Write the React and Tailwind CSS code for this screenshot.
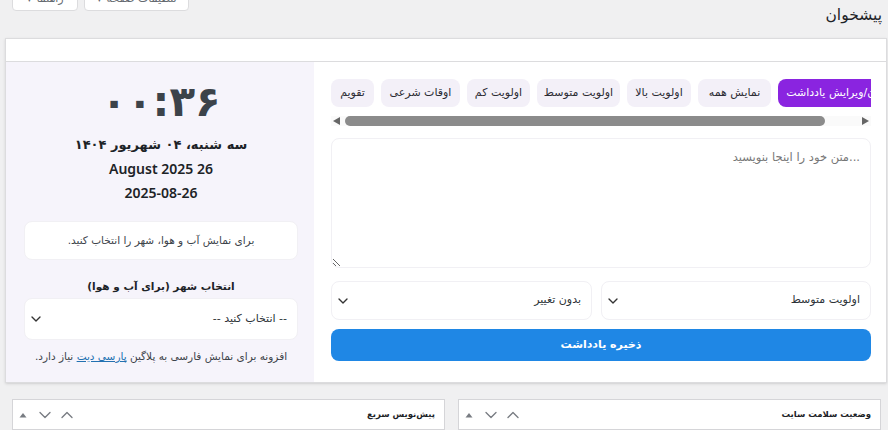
import { ChevronDown, ChevronUp } from "lucide-react";

const tabs = [
    { label: "نمایش همه", width: "w-[73px]" },
    { label: "اولویت بالا", width: "w-[64px]" },
    { label: "اولویت متوسط", width: "w-[83px]" },
    { label: "اولویت کم", width: "w-[63px]" },
    { label: "اوقات شرعی", width: "w-[79px]" },
    { label: "تقویم", width: "w-[43px]" },
];

const Dropdown = ({ label, className }) => {
    return (
        <div className={`flex items-center justify-between rounded-lg border border-[#f1f0f4] bg-white pr-2.5 pl-[3px] text-[11px] text-[#2c3338] ${className}`}>
            <span>{label}</span>
            <ChevronDown size={16} strokeWidth={2} className="text-[#333]" />
        </div>
    );
};

const Postbox = ({ title, className }) => {
    return (
        <div className={`flex h-[31px] items-center justify-between border border-[#d5d5d8] bg-white pr-[9px] ${className}`}>
            <h2 className="text-[8.5px] font-bold text-[#1d2327]">{title}</h2>
            <div className="flex items-center gap-[2px] text-[#787c82]">
                <ChevronUp size={20} strokeWidth={1.6} />
                <ChevronDown size={20} strokeWidth={1.6} />
                <svg width="20" height="20" viewBox="0 0 20 20"><path d="M6.5 12.5 10 8l3.5 4.5z" fill="currentColor" /></svg>
            </div>
        </div>
    );
};

export default function App() {
    return (
        <div dir="rtl" className="flex h-[430px] w-[888px] flex-col overflow-hidden bg-[#f0f0f1] font-['DejaVu_Sans',sans-serif] text-[#1d2327]">
            <header className="flex h-[38px] shrink-0 justify-between pr-[6px] pl-[12px]">
                <h1 className="pt-1 text-[15.5px] leading-[22px] font-medium">پیشخوان</h1>
                <div className="-mt-[13px] flex h-[24px] gap-[6px] text-[11px] text-[#646970]">
                    <button className="flex w-[105px] items-center justify-center gap-1 rounded-b border border-[#dcdcde] bg-white">
                        تنظیمات صفحه <span className="text-[8px]">▼</span>
                    </button>
                    <button className="flex w-[66px] items-center justify-center gap-1 rounded-b border border-[#dcdcde] bg-white">
                        راهنما <span className="text-[8px]">▼</span>
                    </button>
                </div>
            </header>

            <section className="mr-[1px] ml-[5px] shrink-0 border border-[#dcdcde] bg-white shadow-sm">
                <div className="h-[23px] border-b border-[#dcdcde]" />
                <div className="grid h-[320px] grid-cols-[572px_1fr]">
                    <div className="flex flex-col pt-[17px] pr-[15px] pl-[17px]">
                        <div className="flex gap-[7px] overflow-hidden text-[11px] text-[#2c2c34]">
                            <span className="-mr-[37px] flex h-[28px] w-[130px] shrink-0 items-center justify-center rounded-lg bg-[#8a24e0] text-white">افزودن/ویرایش یادداشت</span>
                            {tabs.map((tab) => (
                                <span key={tab.label} className={`flex h-[28px] shrink-0 items-center justify-center rounded-lg bg-[#f3f0f8] ${tab.width}`}>{tab.label}</span>
                            ))}
                        </div>
                        <div className="mt-[9px] flex h-[10px] shrink-0 items-center justify-between bg-[#fafafa] px-[2px]">
                            <span className="border-y-4 border-l-[7px] border-y-transparent border-l-[#666]" />
                            <div className="flex h-full flex-1 justify-end pl-[5px]">
                                <div className="h-full w-[480px] rounded-full bg-[#8b8b8b]" />
                            </div>
                            <span className="border-y-4 border-r-[7px] border-y-transparent border-r-[#666]" />
                        </div>
                        <textarea
                            placeholder="...متن خود را اینجا بنویسید"
                            className="mt-[12px] h-[130px] shrink-0 rounded-lg border border-[#f1f0f4] p-[10px] text-[11.5px] placeholder:text-[#777] focus:outline-none"
                        />
                        <div className="mt-[13px] grid h-[39px] grid-cols-[270px_261px] gap-[9px]">
                            <Dropdown label="اولویت متوسط" />
                            <Dropdown label="بدون تغییر" />
                        </div>
                        <button className="mt-[9px] h-[32px] rounded-lg bg-[#1f87e5] text-[11px] font-bold text-white">ذخیره یادداشت</button>
                    </div>

                    <aside className="flex flex-col items-center bg-[#f6f4fb] pt-[14px] pr-[16px] pl-[18px] text-center">
                        <div dir="ltr" className="text-[42px] leading-[52px] font-bold tracking-[3px] text-[#3c434a]">۰۰:۳۶</div>
                        <p className="mt-[5px] text-[13px] leading-[24px] font-bold">سه شنبه، ۰۴ شهریور ۱۴۰۴</p>
                        <p className="font-['Noto_Sans','DejaVu_Sans',sans-serif] text-[14px] leading-[24px] font-semibold">26 August 2025</p>
                        <p className="font-['Noto_Sans','DejaVu_Sans',sans-serif] text-[14px] leading-[24px] font-semibold">2025-08-26</p>
                        <div className="mt-[16px] flex h-[39px] w-full shrink-0 items-center justify-center rounded-lg border border-[#f1f0f4] bg-white text-[10.5px] text-[#3c434a]">
                            برای نمایش آب و هوا، شهر را انتخاب کنید.
                        </div>
                        <label className="mt-[17px] text-[10.5px] leading-[18px] font-bold">انتخاب شهر (برای آب و هوا)</label>
                        <Dropdown label="-- انتخاب کنید --" className="mt-[3px] h-[42px] w-full shrink-0" />
                        <p className="mt-[9px] text-[10.5px] text-[#3c434a]">
                            افزونه برای نمایش فارسی به پلاگین <a href="#" className="text-[#2271b1] underline">پارسی دیت</a> نیاز دارد.
                        </p>
                    </aside>
                </div>
            </section>

            <div className="mt-[16px] flex gap-[13px] pr-[7px] pl-[12px]">
                <Postbox title="وضعیت سلامت سایت" className="w-[423px]" />
                <Postbox title="پیش‌نویس سریع" className="w-[433px]" />
            </div>
        </div>
    );
}
